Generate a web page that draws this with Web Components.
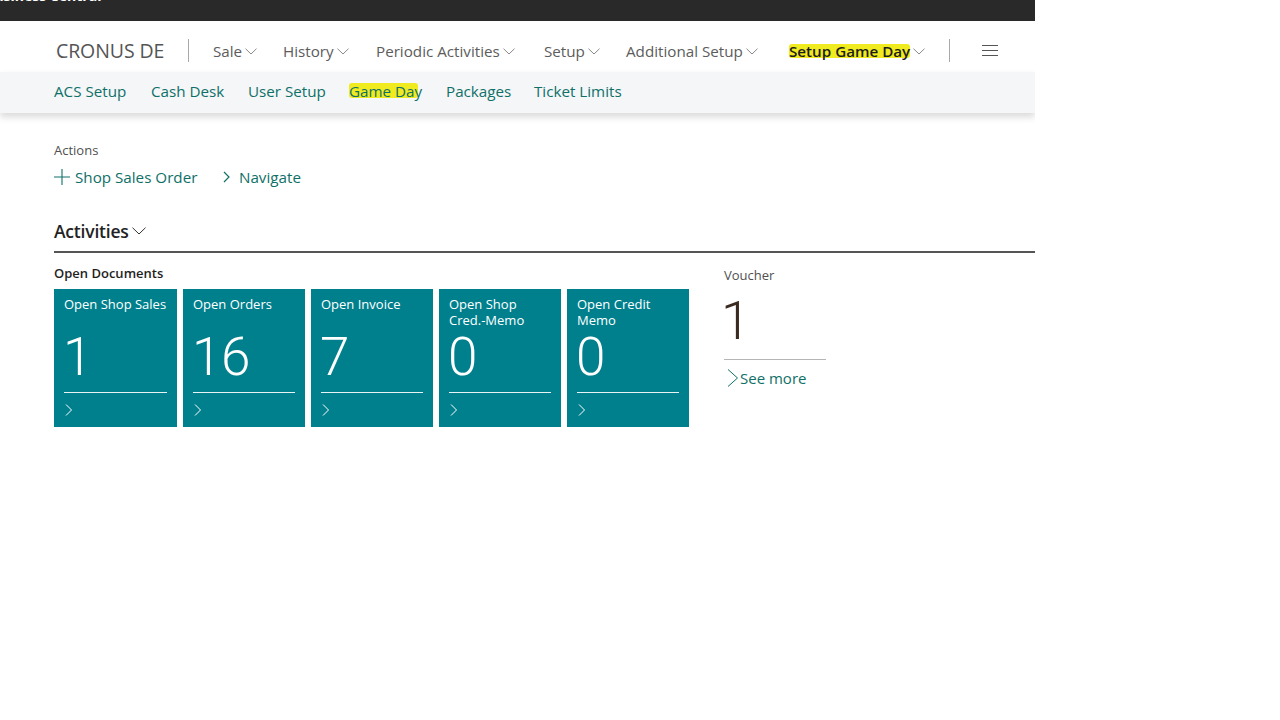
<!DOCTYPE html>
<html><head><meta charset="utf-8"><style>
html,body{margin:0;background:#fff}
body{font-family:"Open Sans","Noto Sans",sans-serif;width:1280px;height:720px;overflow:hidden}
</style></head><body>
<bc-page></bc-page>
<template id="t-page"><style>
:host{display:block;width:1035px;height:720px;overflow:hidden}
.top{height:21px;background:#292929;overflow:hidden;color:#fff;font:700 14px/14px "Open Sans",sans-serif}
.top span{display:block;margin:-11px 0 0 -15px;white-space:nowrap}
.nav{height:51px;box-sizing:border-box;padding:8px 0 0 56px;display:flex;align-items:center;color:#5c5c5c;background:#fff}
.co{font-size:19.500px;width:108px;white-space:nowrap;letter-spacing:-.1px;color:#555}
.div{width:1px;height:23px;background:#a9a9a9;margin:0 24px}
.sub{height:41px;box-sizing:border-box;padding:0 0 4px 54px;background:#f4f6f8;display:flex;align-items:center;gap:24px;box-shadow:0 4px 7px rgba(0,0,0,.15);position:relative}
.ham{margin-left:32px;width:16px;height:11px;border-top:1px solid #555;border-bottom:1px solid #555;position:relative;box-sizing:border-box}
.ham:after{content:"";position:absolute;left:0;right:0;top:4px;height:1px;background:#555}
main{display:block;padding:28px 0 0 54px}
.lbl{font-size:13px;line-height:18px;color:#505050}
.acts{display:flex;align-items:center;height:26px;margin-top:5px;color:#0f7068;font-size:15.200px;white-space:nowrap}
.a1{display:flex;align-items:center;gap:5px;width:168px}
.a2{display:flex;align-items:center;gap:7px}
.acts svg{display:block}
.h{display:flex;align-items:center;gap:3px;margin-top:28px;height:26px;font-size:17.500px;font-weight:600;color:#222;letter-spacing:-.2px}
.rule{height:2px;background:#555;margin-top:7px}
.row{display:flex;margin-top:10px}
.od{width:670px;flex:none}
.odh{font-size:13px;font-weight:600;line-height:20px;color:#1f1f1f}
.tiles{display:flex;gap:6px;margin-top:6px}
.v{margin:2px 0 0 0;width:102px}
.v .lbl{line-height:20px}
.vn{font:300 53px/54px Roboto,sans-serif;margin-top:9px;color:#3a2a20;height:65px}
.vn span{display:inline-block;margin-left:-3px}
.vl{height:1px;background:#b5b5b5}
.more{display:flex;align-items:center;gap:1px;margin:8px 0 0 3px;color:#0f7068;font-size:15px;height:20px;white-space:nowrap}
</style>
<div class="top"><span>Business Central</span></div>
<div class="nav">
<div class="co">CRONUS DE</div><div class="div"></div>
<bc-menu w="70">Sale</bc-menu><bc-menu w="93">History</bc-menu><bc-menu w="168">Periodic Activities</bc-menu><bc-menu w="82">Setup</bc-menu><bc-menu w="163">Additional Setup</bc-menu>
<bc-menu w="136" bold><bc-mark top="3.500" bottom="2.500" right="0">Setup Game Day</bc-mark></bc-menu>
<div class="div" style="margin:0 0 0 24px"></div><div class="ham"></div>
</div>
<div class="sub">
<bc-link w="73">ACS Setup</bc-link><bc-link w="73">Cash Desk</bc-link><bc-link w="77">User Setup</bc-link><bc-link w="73"><bc-mark top="2" bottom="2.500" right="4">Game Day</bc-mark></bc-link><bc-link w="64">Packages</bc-link><bc-link w="87">Ticket Limits</bc-link>
</div>
<main>
<div class="lbl">Actions</div>
<div class="acts">
<div class="a1"><svg width="16" height="16" viewBox="0 0 16 16" fill="none" stroke="#0f7068" stroke-width="1.1"><path d="M8 0v16M0 8h16"/></svg><span>Shop Sales Order</span></div>
<div class="a2"><svg width="10" height="12" viewBox="0 0 10 12" fill="none" stroke="#0f7068" stroke-width="1.2"><path d="M2 1l5 5-5 5"/></svg><span>Navigate</span></div>
</div>
<div class="h"><span>Activities</span><svg width="14" height="8" viewBox="0 0 14 8" fill="none" stroke="#333" stroke-width="1"><path d="M.5 .7L7 7l6.500-6.300"/></svg></div>
<div class="rule"></div>
<div class="row">
<div class="od"><div class="odh">Open Documents</div>
<div class="tiles">
<bc-tile n="1" style="width:123px">Open Shop Sales</bc-tile><bc-tile n="16">Open Orders</bc-tile><bc-tile n="7">Open Invoice</bc-tile><bc-tile n="0">Open Shop Cred.-Memo</bc-tile><bc-tile n="0">Open Credit Memo</bc-tile>
</div></div>
<div class="v"><div class="lbl">Voucher</div><div class="vn"><span>1</span></div><div class="vl"></div>
<div class="more"><svg width="12" height="18" viewBox="0 0 12 18" fill="none" stroke="#0f7068" stroke-width="1"><path d="M1 .5L10.500 9 1 17.500"/></svg><span>See more</span></div></div>
</div>
</main></template>
<template id="t-menu"><style>
:host{display:flex;align-items:center;gap:3px;font-size:15.200px;white-space:nowrap;box-sizing:border-box;color:#5c5c5c}
:host([bold]){font-weight:600;color:#1c1c1c}
svg{display:block;flex:none;margin-top:2px}
</style><slot></slot><svg width="12" height="7" viewBox="0 0 12 7" fill="none" stroke="#8a8a8a" stroke-width="1"><path d="M.5 .7L6 6l5.500-5.300"/></svg></template>
<template id="t-link"><style>
:host{display:block;color:#0f7068;font-size:15.200px;white-space:nowrap}
</style><slot></slot></template>
<template id="t-mark"><style>
:host{display:inline-block;position:relative;z-index:0}
i{position:absolute;left:0;background:#efeb1e;z-index:-1;border-radius:3px;filter:blur(.5px)}
</style><i></i><slot></slot></template>
<template id="t-tile"><style>
:host{display:block;width:122px;height:138px;background:#00808d;color:#fff;box-sizing:border-box;padding:7px 10px 0;flex:none}
.t{font-size:13px;line-height:16px;height:32px}
.n{font:300 53px/50px Roboto,sans-serif;height:60px;margin-top:4px}
.n span{display:inline-block;margin-left:-1px;letter-spacing:-.5px}
.l{height:1px;background:#e8f4f5}
svg{display:block;margin:11px 0 0 0}
</style><div class="t"><slot></slot></div><div class="n"><span></span></div><div class="l"></div><svg width="10" height="12" viewBox="0 0 10 12" fill="none" stroke="#fff" stroke-width="1"><path d="M2 .5l5.500 5.500-5.500 5.500"/></svg></template>
<script>
const def=(name,tid,init)=>customElements.define(name,class extends HTMLElement{
  constructor(){super();this.attachShadow({mode:'open'}).appendChild(document.getElementById(tid).content.cloneNode(true));}
  connectedCallback(){init&&init(this,this.shadowRoot)}
});
const width=(el)=>{const w=el.getAttribute('w');if(w)el.style.width=w+'px';};
def('bc-menu','t-menu',width);
def('bc-link','t-link',width);
def('bc-mark','t-mark',(el,s)=>{const i=s.querySelector('i');i.style.top=el.getAttribute('top')+'px';i.style.bottom=el.getAttribute('bottom')+'px';i.style.right=el.getAttribute('right')+'px';});
def('bc-tile','t-tile',(el,s)=>{s.querySelector('.n span').textContent=el.getAttribute('n');});
def('bc-page','t-page');
</script>
</body></html>
